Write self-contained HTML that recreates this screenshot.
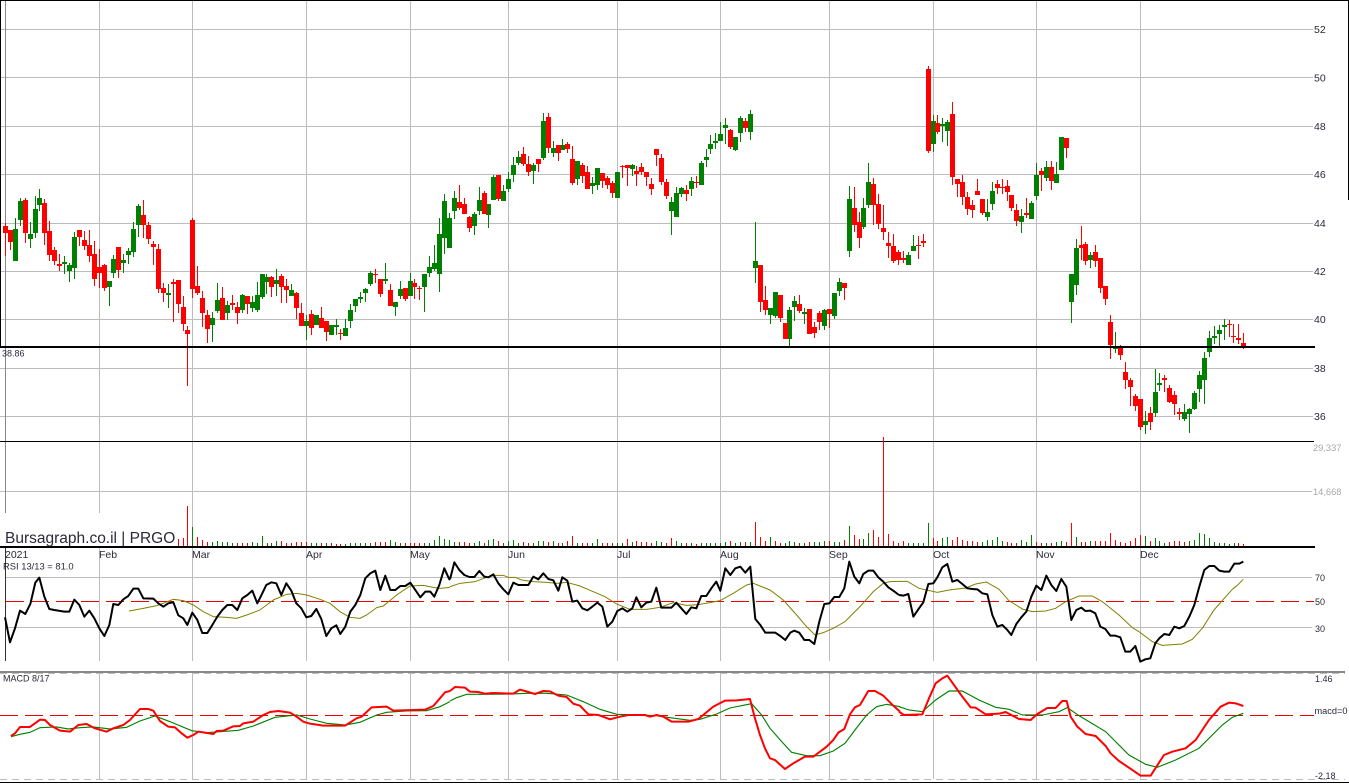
<!DOCTYPE html>
<html><head><meta charset="utf-8"><title>PRGO</title>
<style>html,body{margin:0;padding:0;background:#fff;width:1349px;height:784px;overflow:hidden}svg{display:block}text{font-family:"Liberation Sans",Arial,sans-serif;fill:#2a2a3a}</style></head>
<body>
<svg width="1349" height="784" viewBox="0 0 1349 784" xmlns="http://www.w3.org/2000/svg">
<rect width="1349" height="784" fill="#fff"/>
<g shape-rendering="crispEdges" fill="none">
<path stroke="#bcbcbc" d="M0 29.5H1313M0 77.5H1313M0 126.5H1313M0 174.5H1313M0 223.5H1313M0 271.5H1313M0 319.5H1313M0 368.5H1313M0 416.5H1313M0 491.5H1312M5 577.5H1312M5 627.5H1312"/>
<path stroke="#bcbcbc" d="M99.5 1V661M192.5 1V661M306.5 1V661M410.5 1V661M508.5 1V661M617.5 1V661M720.5 1V661M829.5 1V661M933.5 1V661M1036.5 1V661M1140.5 1V661M99.5 673V779M192.5 673V779M306.5 673V779M410.5 673V779M508.5 673V779M617.5 673V779M720.5 673V779M829.5 673V779M933.5 673V779M1036.5 673V779M1140.5 673V779"/>
<path stroke="#888" d="M5.5 1V513"/>
<path stroke="#333" d="M5.5 548V661"/>
<path stroke="#000" d="M0.5 0V347M1348.5 0V200M0 0.5H1349M0 441.5H1314M0 782.5H1349"/>
<rect x="0" y="671" width="1345" height="2" fill="#888"/>
<path stroke="#bcbcbc" stroke-dasharray="7 5" d="M0 673.5H1345M0 779.5H1345"/>
<path stroke="#e00" stroke-dasharray="18 7" d="M6 601.5H1314M0 715.5H1314"/>
<!-- main candles -->
<path stroke="#008000" d="M15.5 218V261M20.5 198V226M30.5 222V248M35.5 196V238M39.5 189V211M64.5 256V274M69.5 263V282M74.5 232V279M109.5 281V306M113.5 255V278M123.5 254V273M128.5 248V264M133.5 222V257M138.5 204V237M168.5 284V308M212.5 312V342M217.5 283V313M227.5 301V320M242.5 294V313M252.5 296V312M257.5 282V312M262.5 274V299M266.5 274V294M276.5 269V296M291.5 284V296M306.5 315V340M316.5 315V325M331.5 325V335M336.5 319V335M345.5 319V336M350.5 304V328M355.5 299V312M360.5 292V303M365.5 288V302M370.5 271V286M385.5 263V284M395.5 302V316M400.5 281V299M410.5 273V296M424.5 274V312M429.5 256V277M434.5 245V271M439.5 218V292M444.5 194V254M449.5 213V248M454.5 191V219M474.5 212V235M479.5 187V215M488.5 204V228M493.5 175V200M503.5 185V201M508.5 172V192M513.5 157V182M518.5 151V165M533.5 163V184M543.5 113V160M553.5 141V157M562.5 139V150M577.5 161V185M592.5 177V194M597.5 168V190M617.5 172V198M632.5 164V176M671.5 197V235M676.5 187V217M681.5 187V197M691.5 177V196M701.5 161V185M706.5 149V167M710.5 135V154M715.5 133V149M720.5 122V141M725.5 118V144M735.5 137V151M740.5 116V142M750.5 110V140M755.5 222V283M770.5 308V324M775.5 292V318M789.5 307V346M794.5 296V321M804.5 308V324M824.5 309V330M834.5 293V319M839.5 278V296M849.5 186V257M863.5 198V229M868.5 163V208M908.5 252V265M913.5 235V251M933.5 115V152M942.5 118V142M947.5 120V146M987.5 199V221M992.5 182V210M1021.5 209V233M1031.5 201V219M1036.5 163V200M1046.5 161V181M1056.5 162V183M1061.5 137V170M1071.5 274V323M1076.5 239V295M1090.5 252V268M1115.5 332V353M1145.5 411V434M1155.5 369V417M1159.5 373V391M1184.5 404V421M1189.5 408V433M1194.5 391V410M1199.5 371V402M1204.5 352V404M1209.5 331V357M1214.5 326V344M1219.5 325V346M1224.5 319V340"/>
<path stroke="#008000" stroke-width="5" d="M15.5 229V261M20.5 201V220M30.5 234V239M35.5 209V233M39.5 198V205M64.5 262V264M69.5 265V271M74.5 237V268M109.5 281V287M113.5 259V273M123.5 260V263M128.5 251V255M133.5 229V252M138.5 206V225M168.5 293V295M212.5 318V325M217.5 300V311M227.5 305V313M242.5 295V310M252.5 302V308M257.5 295V310M262.5 274V297M266.5 277V282M276.5 280V284M291.5 290V296M306.5 321V326M316.5 315V325M331.5 325V335M336.5 325V327M345.5 328V336M350.5 310V321M355.5 299V306M360.5 297V299M365.5 289V293M370.5 273V284M385.5 279V281M395.5 302V307M400.5 289V296M410.5 281V296M424.5 274V287M429.5 267V273M434.5 263V269M439.5 234V274M444.5 201V238M449.5 218V248M454.5 198V211M474.5 214V226M479.5 200V211M488.5 204V215M493.5 177V200M503.5 191V201M508.5 179V189M513.5 165V175M518.5 157V163M533.5 165V171M543.5 121V158M553.5 148V153M562.5 145V150M577.5 161V179M592.5 183V186M597.5 168V185M617.5 172V198M632.5 165V169M671.5 202V211M676.5 193V217M681.5 188V194M691.5 181V189M701.5 163V185M706.5 157V160M710.5 144V149M715.5 141V143M720.5 134V141M725.5 125V128M735.5 137V150M740.5 118V133M750.5 114V132M755.5 261V268M770.5 308V315M775.5 292V316M789.5 310V339M794.5 301V307M804.5 312V314M824.5 310V326M834.5 293V316M839.5 282V291M849.5 199V251M863.5 208V227M868.5 182V205M908.5 255V265M913.5 246V251M933.5 121V144M942.5 124V126M947.5 122V131M987.5 212V217M992.5 191V204M1021.5 216V222M1031.5 203V219M1036.5 175V196M1046.5 167V178M1056.5 174V183M1061.5 137V170M1071.5 274V302M1076.5 248V285M1090.5 255V260M1115.5 347V349M1145.5 421V425M1155.5 392V413M1159.5 383V385M1184.5 412V419M1189.5 409V414M1194.5 393V409M1199.5 375V389M1204.5 358V380M1209.5 338V352M1214.5 336V338M1219.5 330V334M1224.5 325V327"/>
<path stroke="#f00" d="M5.5 223V256M10.5 230V250M25.5 198V243M44.5 199V245M49.5 221V261M54.5 247V265M59.5 254V271M79.5 230V246M84.5 231V250M89.5 230V262M94.5 241V286M99.5 249V288M104.5 264V291M118.5 247V278M143.5 200V238M148.5 222V244M153.5 241V265M158.5 244V293M163.5 283V302M173.5 279V322M178.5 280V313M183.5 296V331M187.5 326V386M192.5 218V298M197.5 266V295M202.5 291V327M207.5 310V343M222.5 287V320M232.5 295V310M237.5 302V324M247.5 296V314M271.5 276V297M281.5 274V303M286.5 279V303M296.5 292V319M301.5 303V326M311.5 310V335M321.5 307V328M326.5 321V341M340.5 329V340M375.5 269V283M380.5 279V297M390.5 284V306M405.5 288V301M414.5 279V299M419.5 286V300M459.5 185V210M464.5 198V214M469.5 216V232M484.5 191V214M498.5 175V201M523.5 147V166M528.5 156V176M538.5 159V172M548.5 113V153M558.5 145V161M567.5 142V153M572.5 146V185M582.5 163V183M587.5 166V189M602.5 173V188M607.5 176V189M612.5 181V198M622.5 165V178M627.5 165V186M636.5 166V186M641.5 163V175M646.5 172V186M651.5 178V195M656.5 149V166M661.5 154V185M666.5 179V199M686.5 185V201M696.5 176V188M730.5 129V149M745.5 118V132M760.5 265V312M765.5 286V315M780.5 295V322M785.5 323V339M799.5 295V313M809.5 309V334M814.5 322V338M819.5 311V330M829.5 309V328M844.5 283V300M854.5 187V232M859.5 212V248M873.5 178V225M878.5 194V229M883.5 205V240M888.5 232V258M893.5 234V263M898.5 250V265M903.5 251V263M918.5 236V259M923.5 234V247M928.5 66V153M937.5 115V134M952.5 102V185M957.5 179V197M962.5 175V205M967.5 192V215M972.5 200V218M977.5 179V195M982.5 199V215M997.5 180V194M1002.5 179V194M1007.5 180V201M1011.5 195V211M1016.5 204V226M1026.5 198V218M1041.5 168V191M1051.5 161V190M1066.5 138V158M1081.5 226V260M1085.5 242V265M1095.5 245V267M1100.5 258V293M1105.5 286V305M1110.5 315V359M1120.5 345V360M1125.5 362V389M1130.5 378V406M1135.5 394V411M1140.5 399V430M1150.5 407V430M1164.5 375V392M1169.5 385V403M1174.5 391V415M1179.5 408V420M1229.5 320V337M1233.5 324V343M1238.5 324V344M1243.5 333V349"/>
<path stroke="#f00" stroke-width="5" d="M5.5 226V233M10.5 230V242M25.5 200V233M44.5 203V233M49.5 231V255M54.5 250V261M59.5 264V266M79.5 230V237M84.5 240V246M89.5 245V256M94.5 254V279M99.5 267V273M104.5 265V288M118.5 247V270M143.5 215V225M148.5 225V239M153.5 244V247M158.5 249V289M163.5 288V293M173.5 282V284M178.5 280V304M183.5 307V324M187.5 330V334M192.5 220V289M197.5 286V293M202.5 298V313M207.5 315V329M222.5 298V320M232.5 303V305M237.5 307V313M247.5 296V304M271.5 277V287M281.5 276V287M286.5 286V290M296.5 293V308M301.5 313V326M311.5 314V328M321.5 318V328M326.5 321V332M340.5 333V334M375.5 274V275M380.5 279V294M390.5 290V306M405.5 288V299M414.5 283V287M419.5 288V289M459.5 202V208M464.5 204V214M469.5 217V228M484.5 193V214M498.5 175V199M523.5 154V164M528.5 164V172M538.5 159V164M548.5 117V148M558.5 145V153M567.5 144V149M572.5 159V183M582.5 165V176M587.5 172V189M602.5 173V181M607.5 178V185M612.5 183V193M622.5 166V167M627.5 165V168M636.5 171V174M641.5 167V172M646.5 172V177M651.5 184V189M656.5 149V155M661.5 158V182M666.5 182V196M686.5 190V194M696.5 182V183M730.5 130V147M745.5 121V128M760.5 265V302M765.5 300V310M780.5 295V318M785.5 323V339M799.5 304V311M809.5 309V334M814.5 327V333M819.5 313V322M829.5 309V314M844.5 283V288M854.5 208V225M859.5 222V238M873.5 184V205M878.5 204V224M883.5 228V232M888.5 243V246M893.5 246V261M898.5 252V260M903.5 258V260M918.5 245V246M923.5 241V243M928.5 69V151M937.5 123V132M952.5 114V177M957.5 179V184M962.5 182V197M967.5 197V209M972.5 205V210M977.5 191V195M982.5 199V213M997.5 184V188M1002.5 187V188M1007.5 186V192M1011.5 195V208M1016.5 210V221M1026.5 213V215M1041.5 171V175M1051.5 167V181M1066.5 138V148M1081.5 245V248M1085.5 244V261M1095.5 252V261M1100.5 258V288M1105.5 286V299M1110.5 322V345M1120.5 347V355M1125.5 372V380M1130.5 380V387M1135.5 396V406M1140.5 399V427M1150.5 413V422M1164.5 378V380M1169.5 388V402M1174.5 395V404M1179.5 412V414M1229.5 324V325M1233.5 336V337M1238.5 338V340M1243.5 343V347"/>
<!-- volume -->
<path stroke="#f00" d="M178.5 546v-7M183.5 546v-8M187.5 546v-40M197.5 546v-9M202.5 546v-6M207.5 546v-4M237.5 546v-3M242.5 546v-3M247.5 546v-3M267.5 546v-3M281.5 546v-5M286.5 546v-3M291.5 546v-3M296.5 546v-4M301.5 546v-4M306.5 546v-4M321.5 546v-3M331.5 546v-3M336.5 546v-2M340.5 546v-2M375.5 546v-4M380.5 546v-4M385.5 546v-4M405.5 546v-3M410.5 546v-3M414.5 546v-3M419.5 546v-3M459.5 546v-4M464.5 546v-4M469.5 546v-3M484.5 546v-3M498.5 546v-5M523.5 546v-4M528.5 546v-3M548.5 546v-4M558.5 546v-3M567.5 546v-5M572.5 546v-10M582.5 546v-3M587.5 546v-3M602.5 546v-3M607.5 546v-3M612.5 546v-3M627.5 546v-7M636.5 546v-5M641.5 546v-4M646.5 546v-4M651.5 546v-3M666.5 546v-3M671.5 546v-8M686.5 546v-3M696.5 546v-2M730.5 546v-5M745.5 546v-4M755.5 546v-24M760.5 546v-9M765.5 546v-5M775.5 546v-5M780.5 546v-3M799.5 546v-3M809.5 546v-4M829.5 546v-5M844.5 546v-6M854.5 546v-11M859.5 546v-7M873.5 546v-16M878.5 546v-9M883.5 546v-109M888.5 546v-12M893.5 546v-5M898.5 546v-3M903.5 546v-5M933.5 546v-8M937.5 546v-5M952.5 546v-6M957.5 546v-9M962.5 546v-6M967.5 546v-5M972.5 546v-5M977.5 546v-4M1007.5 546v-4M1011.5 546v-3M1016.5 546v-3M1036.5 546v-4M1041.5 546v-3M1051.5 546v-3M1066.5 546v-4M1071.5 546v-23M1081.5 546v-4M1085.5 546v-4M1095.5 546v-5M1100.5 546v-5M1105.5 546v-5M1110.5 546v-13M1115.5 546v-6M1120.5 546v-4M1125.5 546v-3M1130.5 546v-5M1135.5 546v-8M1140.5 546v-11M1150.5 546v-5M1169.5 546v-4M1174.5 546v-5M1179.5 546v-5M1184.5 546v-4M1238.5 546v-3M1243.5 546v-2"/>
<path stroke="#008000" d="M192.5 546v-19M212.5 546v-4M217.5 546v-5M222.5 546v-4M227.5 546v-4M232.5 546v-3M252.5 546v-4M257.5 546v-3M262.5 546v-10M271.5 546v-3M276.5 546v-5M311.5 546v-3M316.5 546v-3M326.5 546v-3M345.5 546v-2M350.5 546v-3M355.5 546v-3M360.5 546v-3M365.5 546v-3M370.5 546v-3M390.5 546v-6M395.5 546v-4M400.5 546v-3M424.5 546v-3M429.5 546v-3M434.5 546v-6M439.5 546v-10M444.5 546v-7M449.5 546v-6M454.5 546v-4M474.5 546v-3M479.5 546v-5M488.5 546v-6M493.5 546v-7M503.5 546v-3M508.5 546v-5M513.5 546v-6M518.5 546v-3M533.5 546v-3M538.5 546v-5M543.5 546v-5M553.5 546v-5M562.5 546v-3M577.5 546v-3M592.5 546v-3M597.5 546v-7M617.5 546v-3M622.5 546v-3M632.5 546v-4M656.5 546v-5M661.5 546v-4M676.5 546v-5M681.5 546v-3M691.5 546v-3M701.5 546v-3M706.5 546v-3M710.5 546v-3M715.5 546v-3M720.5 546v-3M725.5 546v-4M735.5 546v-3M740.5 546v-4M750.5 546v-4M770.5 546v-9M785.5 546v-3M789.5 546v-5M794.5 546v-4M804.5 546v-3M814.5 546v-4M819.5 546v-4M824.5 546v-5M834.5 546v-4M839.5 546v-4M849.5 546v-20M863.5 546v-7M868.5 546v-13M908.5 546v-3M913.5 546v-3M918.5 546v-3M923.5 546v-3M928.5 546v-23M942.5 546v-8M947.5 546v-9M982.5 546v-4M987.5 546v-6M992.5 546v-6M997.5 546v-9M1002.5 546v-5M1021.5 546v-6M1026.5 546v-4M1031.5 546v-11M1046.5 546v-3M1056.5 546v-4M1061.5 546v-5M1076.5 546v-9M1090.5 546v-5M1145.5 546v-10M1155.5 546v-8M1159.5 546v-5M1164.5 546v-3M1189.5 546v-5M1194.5 546v-6M1199.5 546v-13M1204.5 546v-12M1209.5 546v-8M1214.5 546v-4M1219.5 546v-3M1224.5 546v-3M1229.5 546v-2M1234.5 546v-3"/>
<rect x="1" y="513" width="176" height="33" fill="#fff"/>
<path stroke="#000" stroke-width="2" d="M0 347H1315"/>
<path stroke="#000" stroke-width="2" d="M0 547H1315"/>
</g>
<!-- RSI olive MA -->
<g fill="none" stroke="#808000" stroke-width="3" transform="translate(0,500) scale(.3333)"><polyline points="387,333 430,325 470,317 490,310 520,298 550,302 580,315 610,335 640,350 680,352 710,355 740,345 780,330 820,300 860,283 890,280 920,285 960,298 990,310 1020,335 1050,352 1080,355 1100,345 1130,323 1150,318 1190,285 1230,258 1270,256 1300,262 1320,265 1350,262"/></g>
<g fill="none" stroke="#808000" stroke-width="3" transform="translate(450,500) scale(.3333)"><polyline points="0,260 30,250 75,245 110,232 135,226 160,226 175,232 195,232 215,240 250,245 290,247 320,250 350,247 390,258 430,275 465,290 500,312 540,328 590,328 630,322 670,308 710,316 745,314 780,308 810,302 850,280 890,255 910,250 960,270 1000,300 1040,345 1070,380 1095,405 1120,398 1150,385 1185,365 1230,320 1270,275 1300,250 1320,245 1350,244"/></g>
<g fill="none" stroke="#808000" stroke-width="3" transform="translate(899,430) scale(.3333)"><polyline points="0,454 25,454 60,475 115,487 150,480 200,474 230,462 262,456 300,478 330,512 370,537 400,545 440,543 470,535 500,515 540,498 580,498 610,515 660,555 700,593 720,605 760,635 790,646 850,642 880,628 910,595 945,540 1000,478 1015,466 1033,448"/></g>
<!-- RSI black -->
<g fill="none" stroke="#000" stroke-width="6" stroke-linejoin="round" transform="translate(0,500) scale(.3333)"><polyline points="15,352 30,427 45,385 60,332 76,342 91,312 106,248 118,233 133,290 148,327 163,330 193,335 208,335 223,299 238,315 253,350 268,332 283,355 298,385 313,408 328,375 340,312 355,315 370,298 385,288 400,266 415,266 430,295 460,296 475,310 490,320 505,310 520,307 535,346 550,355 562,375 577,338 592,360 607,399 622,399 637,375 652,350 667,330 682,315 697,315 712,330 727,295 742,285 757,272 772,310 787,280 799,255 814,247 829,250 844,285 859,250 874,272 889,310 904,325 919,352 934,348 949,327 964,357 979,408 994,385 1009,376 1021,402 1036,380 1051,335 1066,315 1081,285 1096,235 1111,220 1126,212 1141,270 1156,227 1171,270 1186,270 1201,258 1216,258 1231,248 1246,270 1261,292 1276,275 1291,275 1303,290 1318,255 1333,205 1348,238 1350,238"/></g>
<g fill="none" stroke="#000" stroke-width="6" stroke-linejoin="round" transform="translate(450,500) scale(.3333)"><polyline points="0,238 13,187 28,210 43,225 58,231 73,231 88,213 103,230 115,232 130,223 145,250 160,268 175,283 190,248 205,255 220,255 235,255 250,230 265,238 280,220 295,237 310,241 325,272 337,232 352,242 367,305 382,302 397,325 412,331 427,320 442,308 457,320 472,380 487,365 502,333 517,325 532,335 547,325 559,292 574,322 589,308 604,305 619,263 634,323 664,323 679,308 694,325 709,342 724,322 739,325 754,288 769,288 784,265 799,245 811,272 826,205 841,225 856,205 871,200 886,218 901,200 916,357 931,375 946,398 976,398 991,408 1006,420 1021,398 1033,392 1048,398 1063,420 1078,420 1093,432 1108,365 1123,312 1138,310 1153,291 1168,291 1183,265 1198,185 1213,230 1228,250 1240,222 1255,212 1270,212 1285,232 1300,245 1315,262 1330,272 1347,285"/></g>
<g fill="none" stroke="#000" stroke-width="6" stroke-linejoin="round" transform="translate(899,430) scale(.3333)"><polyline points="0,495 13,497 28,492 43,560 58,538 73,517 88,462 103,460 115,442 130,412 145,402 160,455 175,450 190,462 205,475 220,477 235,478 250,490 265,493 280,555 295,590 310,585 325,600 337,615 352,582 367,562 382,545 397,500 412,467 427,480 442,437 457,465 472,483 487,447 502,470 517,570 532,540 547,533 559,543 574,542 589,550 604,590 619,597 634,617 649,617 664,622 679,665 694,665 709,648 724,695 739,688 754,685 769,640 781,625 796,612 811,615 826,590 841,595 856,588 871,560 886,525 901,470 916,420 931,408 946,408 961,422 976,425 991,425 1006,401 1021,401 1033,395"/></g>
<!-- MACD green -->
<g fill="none" stroke="#008000" stroke-width="3.4" transform="translate(0,665) scale(.3333)"><polyline points="33,215 60,208 90,202 120,188 170,186 205,192 240,188 280,186 330,192 380,187 420,168 465,153 510,170 575,197 620,203 660,200 715,196 760,183 825,157 890,150 930,162 980,175 1035,180 1080,172 1130,150 1160,142 1220,138 1280,137 1320,125 1350,110"/></g>
<g fill="none" stroke="#008000" stroke-width="3.4" transform="translate(450,665) scale(.3333)"><polyline points="0,108 20,98 50,88 100,88 180,87 230,85 290,85 350,90 400,110 450,133 500,148 560,150 620,152 660,158 720,166 750,163 800,147 840,129 905,116 935,150 960,190 1000,235 1025,262 1070,272 1110,272 1150,258 1185,235 1215,195 1250,150 1280,125 1310,118 1350,125"/></g>
<g fill="none" stroke="#008000" stroke-width="3.4" transform="translate(899,665) scale(.3333)"><polyline points="0,125 30,135 70,140 110,105 150,78 190,78 240,105 290,127 330,133 370,150 430,150 480,140 505,128 540,152 620,200 690,270 740,298 775,307 830,285 900,250 970,180 1000,157 1033,145"/></g>
<!-- MACD red -->
<g fill="none" stroke="#f00" stroke-width="6" stroke-linejoin="round" transform="translate(0,665) scale(.3333)"><polyline points="33,213 45,205 60,186 90,186 120,164 135,165 150,180 180,197 210,200 235,180 260,177 285,190 320,200 340,190 370,180 390,165 420,132 445,132 460,137 480,168 505,185 525,187 545,205 562,218 580,210 595,200 640,207 650,198 670,197 700,184 720,183 730,175 760,170 790,150 810,141 835,138 870,143 890,155 910,170 930,176 970,182 1035,182 1070,160 1085,155 1115,127 1160,125 1180,137 1275,134 1300,123 1320,100 1335,82 1350,78"/></g>
<g fill="none" stroke="#f00" stroke-width="6" stroke-linejoin="round" transform="translate(450,665) scale(.3333)"><polyline points="0,78 15,66 45,68 60,80 85,81 105,86 130,84 190,86 210,74 225,78 255,87 280,78 300,79 325,92 350,96 370,116 390,122 415,148 445,150 480,163 510,155 535,150 585,150 600,155 620,150 640,155 665,170 715,170 745,162 790,125 825,107 860,106 900,102 915,160 930,210 945,250 960,280 975,285 1005,312 1030,295 1065,275 1090,275 1130,245 1150,225 1165,203 1183,192 1200,148 1215,127 1230,120 1255,78 1275,78 1300,92 1330,122 1350,140"/></g>
<g fill="none" stroke="#f00" stroke-width="6" stroke-linejoin="round" transform="translate(899,665) scale(.3333)"><polyline points="0,140 15,150 70,148 90,100 110,55 130,40 145,32 165,60 190,95 215,127 230,128 260,148 300,146 320,141 360,162 395,165 415,147 445,129 470,129 490,108 503,108 515,155 535,185 560,207 590,213 620,243 635,265 660,288 690,308 725,332 755,332 795,270 820,260 860,250 890,225 930,165 965,125 990,113 1010,115 1033,123"/></g>
<!-- labels -->
<g font-size="10.5"><text x="1314" y="33">52</text><text x="1314" y="81.5">50</text><text x="1314" y="130">48</text><text x="1314" y="178">46</text><text x="1314" y="227">44</text><text x="1314" y="275">42</text><text x="1314" y="323">40</text><text x="1314" y="372">38</text><text x="1314" y="420">36</text></g>
<text x="2" y="356.5" font-size="9">38.86</text>
<g font-size="9.3" style="fill:#a8a8a8"><text x="1313" y="451" style="fill:#a8a8a8">29,337</text><text x="1313" y="495" style="fill:#a8a8a8">14,668</text></g>
<text x="5" y="543" font-size="15.5">Bursagraph.co.il | PRGO</text>
<g font-size="10.5"><text x="5" y="558">2021</text><text x="99" y="558">Feb</text><text x="192" y="558">Mar</text><text x="306" y="558">Apr</text><text x="410" y="558">May</text><text x="508" y="558">Jun</text><text x="617" y="558">Jul</text><text x="720" y="558">Aug</text><text x="829" y="558">Sep</text><text x="933" y="558">Oct</text><text x="1036" y="558">Nov</text><text x="1140" y="558">Dec</text></g>
<text x="3" y="569.5" font-size="9.4">RSI 13/13 = 81.0</text>
<g font-size="9"><text x="1315" y="581">70</text><text x="1315" y="605">50</text><text x="1315" y="632">30</text><text x="3" y="681.5">MACD 8/17</text><text x="1315" y="682">1.46</text><text x="1315" y="779">-2.18</text></g>
<text x="1314.5" y="714" font-size="9.2">macd=0</text>
</svg>
</body></html>
